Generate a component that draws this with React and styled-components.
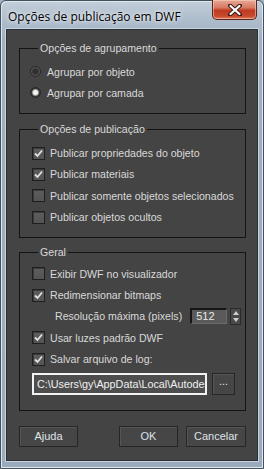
import React from "react";
import styled, { createGlobalStyle } from "styled-components";

const Global = createGlobalStyle`
  html, body { margin: 0; padding: 0; }
  body {
    width: 264px;
    height: 469px;
    overflow: hidden;
    background: #9fb1c4;
    font-family: "Liberation Sans", Arial, sans-serif;
  }
`;

const Window = styled.div`
  box-sizing: border-box;
  width: 264px;
  height: 469px;
  display: flex;
  flex-direction: column;
  border: 1px solid #44505c;
  border-radius: 6px 6px 0 0;
  background: linear-gradient(180deg, #c3ced9 0px, #aebdcc 18px, #9fb0c2 40px, #9aabbd 100%);
  box-shadow: inset 1px 1px 0 #dfe6ee, inset -1px -1px 0 #dfe6ee;
`;

const TitleBar = styled.div`
  height: 28px;
  display: flex;
  align-items: flex-start;
  padding-left: 7px;
`;

const Title = styled.div`
  margin-top: 9px;
  font-family: "Open Sans", "Noto Sans", sans-serif;
  font-size: 12px;
  line-height: 14px;
  color: #000;
  text-shadow: 0 0 6px rgba(255, 255, 255, 0.9), 0 0 3px rgba(255, 255, 255, 0.8);
`;

const CloseButton = styled.div`
  margin-left: auto;
  margin-right: 6px;
  margin-top: -1px;
  width: 45px;
  height: 20px;
  box-sizing: border-box;
  border: 1px solid #5a2420;
  border-top: none;
  border-radius: 0 0 5px 5px;
  background: linear-gradient(180deg, #e9a897 0%, #d77a64 40%, #bf3a22 55%, #c74a2e 85%, #e07d5a 100%);
  box-shadow: inset 0 0 0 1px rgba(255, 220, 200, 0.5);
  display: flex;
  align-items: center;
  justify-content: center;
`;

const Client = styled.div`
  flex: 1;
  margin: 0 5px 7px 5px;
  background: #444444;
  border: 1px solid #2c3136;
  box-shadow: 0 0 0 1px #c9d3dd;
  padding: 12px 11px 0 12px;
  display: flex;
  flex-direction: column;
  color: #d9d9d9;
  font-size: 10.6px;
`;

const Group = styled.fieldset`
  margin: 0 0 ${(p) => p.$gap}px 0;
  padding: ${(p) => p.$top}px 0 ${(p) => p.$bottom}px 12px;
  border: 1px solid #141414;
  min-width: 0;
`;

const Legend = styled.legend`
  margin-left: 6px;
  padding: 0 2px;
  line-height: 13px;
  color: #d9d9d9;
`;

const Row = styled.div`
  height: ${(p) => p.$h || 21.3}px;
  display: flex;
  align-items: center;
  gap: ${(p) => p.$gap || 4}px;
  padding-left: ${(p) => p.$indent || 0}px;
  white-space: nowrap;
`;

const Radio = styled.span`
  box-sizing: border-box;
  width: 11px;
  height: 11px;
  margin: 0 2px 0 -2px;
  border-radius: 50%;
  border: 1px solid #262626;
  background: ${(p) =>
    p.$on
      ? "radial-gradient(circle, #f4f4f4 0 2px, #9a9a9a 3px, #3a3a3a 4px)"
      : "radial-gradient(circle, #2f2f2f 0 2px, #3a3a3a 3px, #6a6a6a 5px)"};
`;

const Box = styled.span`
  box-sizing: border-box;
  width: 13px;
  height: 13px;
  flex: none;
  border: 1px solid #1f1f1f;
  background: linear-gradient(180deg, #5d5d5d, #545454);
  box-shadow: inset 1px 1px 0 #3c3c3c;
  display: flex;
  align-items: center;
  justify-content: center;
`;

const SpinField = styled.div`
  margin-left: 4px;
  width: 37px;
  height: 16px;
  box-sizing: border-box;
  border-top: 2px solid #161616;
  border-left: 2px solid #161616;
  border-right: 1px solid #6a6a6a;
  border-bottom: 1px solid #6a6a6a;
  background: #5a5a5a;
  color: #e8e8e8;
  padding-left: 4px;
  line-height: 13px;
  font-size: 11px;
`;

const Spinner = styled.div`
  margin-left: -1px;
  width: 11px;
  height: 17px;
  box-sizing: border-box;
  border: 1px solid #2a2a2a;
  background: #4a4a4a;
  display: flex;
  flex-direction: column;
  align-items: center;
  justify-content: center;
  gap: 3px;
`;

const PathRow = styled.div`
  margin-top: 3px;
  display: flex;
  gap: 5px;
`;

const PathInput = styled.div`
  box-sizing: border-box;
  width: 175px;
  height: 22px;
  border: 2px solid #f2f2f2;
  background: #4d4d4d;
  color: #f0f0f0;
  padding: 0 3px;
  line-height: 18px;
  font-size: 10.8px;
  overflow: hidden;
  white-space: nowrap;
`;

const Button = styled.div`
  box-sizing: border-box;
  width: ${(p) => p.$w || 59}px;
  height: ${(p) => p.$h || 21}px;
  border: 1px solid #262626;
  box-shadow: inset 1px 1px 0 #555;
  background: #464646;
  color: #dfe3ea;
  display: flex;
  align-items: center;
  justify-content: center;
  padding-bottom: ${(p) => (p.$dots ? 5 : 0)}px;
  font-size: 11px;
`;

const ButtonBar = styled.div`
  display: flex;
  gap: 8px;
  margin-top: 15px;
  & > :first-child {
    margin-right: auto;
  }
`;

const Check = () => (
  <svg width="9" height="9" viewBox="0 0 9 9">
    <path d="M1 4.5 L3.5 7 L8 1.5" fill="none" stroke="#e2e2e2" strokeWidth="1.8" />
  </svg>
);

const CheckRow = ({ on, children, h }) => (
  <Row $h={h} $gap={5}>
    <Box>{on && <Check />}</Box>
    <span>{children}</span>
  </Row>
);

export default function App() {
  return (
    <>
      <Global />
      <Window>
        <TitleBar>
          <Title>Opções de publicação em DWF</Title>
          <CloseButton>
            <svg width="14" height="12" viewBox="0 0 14 12">
              <path d="M2 1.5 L12 10.5 M12 1.5 L2 10.5" stroke="#3a1a14" strokeWidth="4" strokeLinecap="round" />
              <path d="M2.5 2 L11.5 10 M11.5 2 L2.5 10" stroke="#ffffff" strokeWidth="2.2" strokeLinecap="round" />
            </svg>
          </CloseButton>
        </TitleBar>
        <Client>
          <Group $top={6} $bottom={10} $gap={8.5}>
            <Legend>Opções de agrupamento</Legend>
            <Row $h={21}>
              <Radio />
              <span>Agrupar por objeto</span>
            </Row>
            <Row $h={21}>
              <Radio $on />
              <span>Agrupar por camada</span>
            </Row>
          </Group>

          <Group $top={7} $bottom={9} $gap={8.5}>
            <Legend>Opções de publicação</Legend>
            <CheckRow on>Publicar propriedades do objeto</CheckRow>
            <CheckRow on>Publicar materiais</CheckRow>
            <CheckRow>Publicar somente objetos selecionados</CheckRow>
            <CheckRow>Publicar objetos ocultos</CheckRow>
          </Group>

          <Group $top={4} $bottom={15} $gap={0}>
            <Legend>Geral</Legend>
            <CheckRow>Exibir DWF no visualizador</CheckRow>
            <CheckRow on>Redimensionar bitmaps</CheckRow>
            <Row $indent={23} $h={21.3}>
              <span>Resolução máxima (pixels)</span>
              <SpinField>512</SpinField>
              <Spinner>
                <svg width="6" height="4" viewBox="0 0 6 4">
                  <path d="M0 4 L3 0 L6 4 Z" fill="#d0d0d0" />
                </svg>
                <svg width="6" height="4" viewBox="0 0 6 4">
                  <path d="M0 0 L3 4 L6 0 Z" fill="#d0d0d0" />
                </svg>
              </Spinner>
            </Row>
            <CheckRow on>Usar luzes padrão DWF</CheckRow>
            <CheckRow on>Salvar arquivo de log:</CheckRow>
            <PathRow>
              <PathInput>C:\Users\gy\AppData\Local\Autodesk</PathInput>
              <Button $w={23} $h={22} $dots>...</Button>
            </PathRow>
          </Group>

          <ButtonBar>
            <Button>Ajuda</Button>
            <Button>OK</Button>
            <Button $w={60}>Cancelar</Button>
          </ButtonBar>
        </Client>
      </Window>
    </>
  );
}
